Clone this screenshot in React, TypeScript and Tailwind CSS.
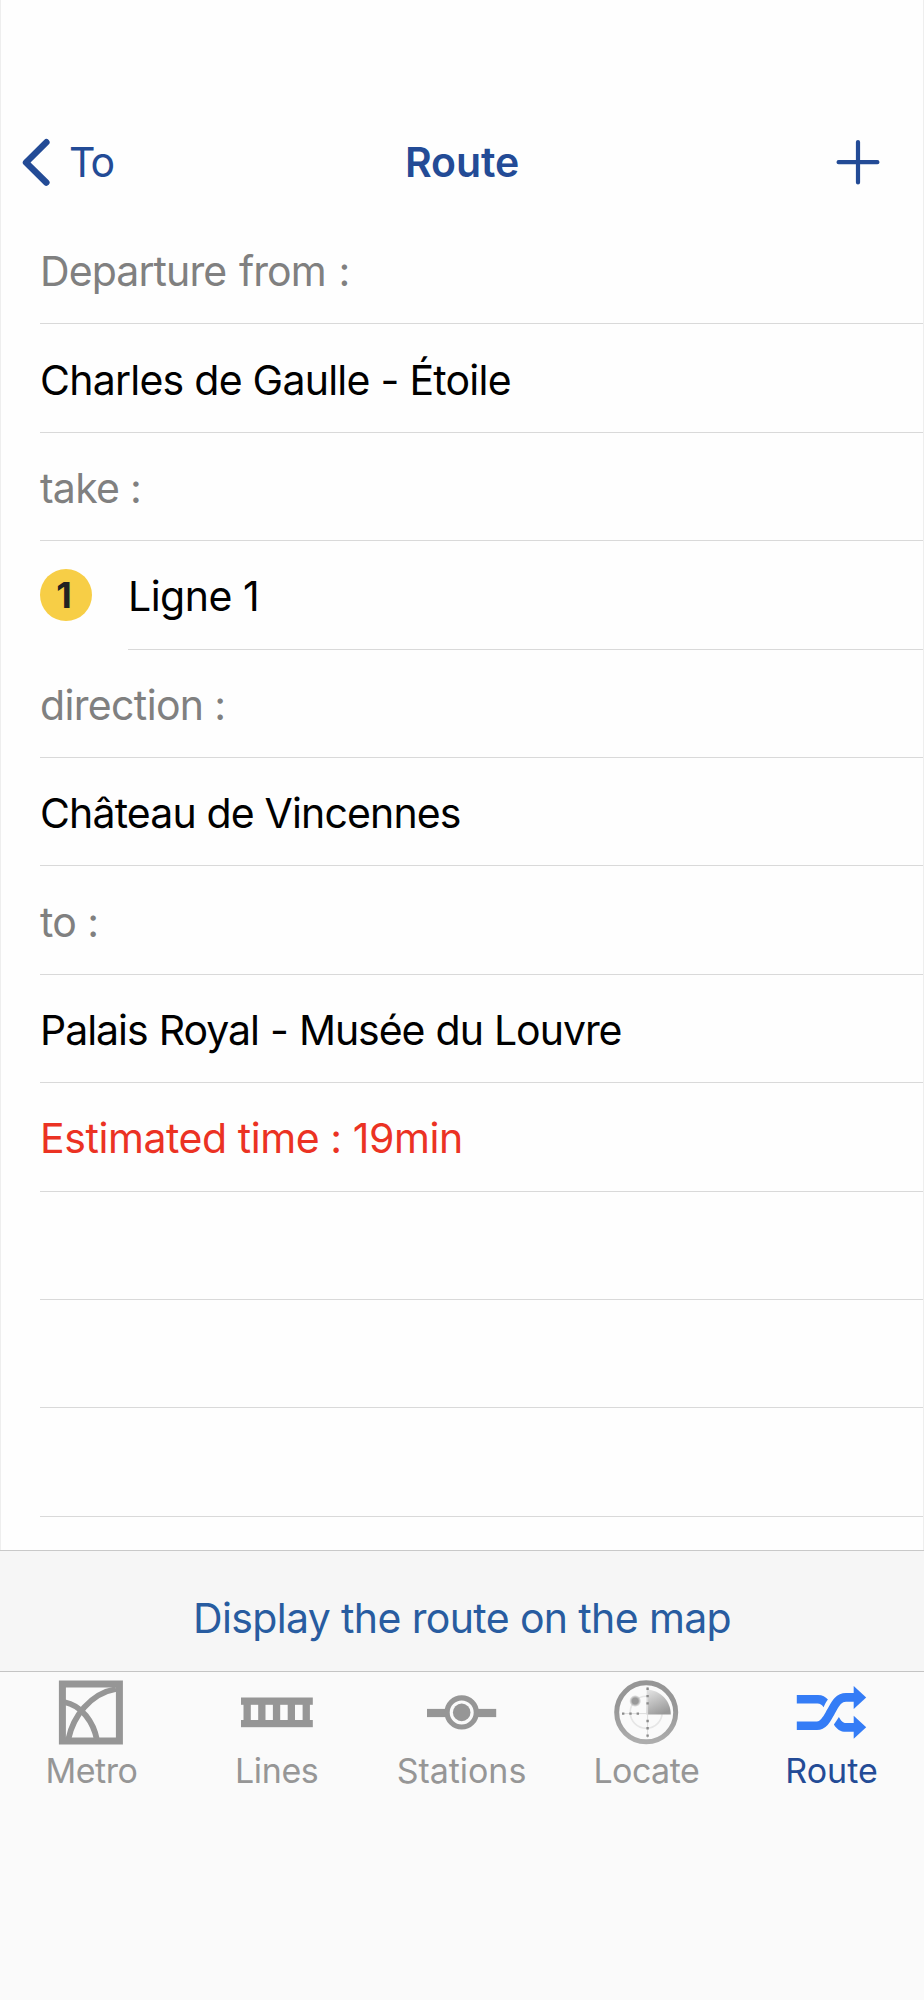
import React from "react";
import { clsx } from "clsx";

interface RouteRow {
  text: string;
  tone: "label" | "station" | "time";
  tracking: string;
  line?: string;
}

const rows: RouteRow[] = [
  { text: "Departure from :", tone: "label", tracking: "tracking-[-0.9px] [word-spacing:2px]" },
  { text: "Charles de Gaulle - Étoile", tone: "station", tracking: "tracking-[-0.75px]" },
  { text: "take :", tone: "label", tracking: "tracking-[-0.75px]" },
  { text: "Ligne 1", tone: "station", tracking: "tracking-[-0.5px]", line: "1" },
  { text: "direction :", tone: "label", tracking: "tracking-[-0.65px]" },
  { text: "Château de Vincennes", tone: "station", tracking: "tracking-[-0.85px]" },
  { text: "to :", tone: "label", tracking: "tracking-[-0.65px]" },
  { text: "Palais Royal - Musée du Louvre", tone: "station", tracking: "tracking-[-1.03px] [word-spacing:0.6px]" },
  { text: "Estimated time : 19min", tone: "time", tracking: "tracking-[-0.43px]" },
  { text: "", tone: "label", tracking: "" },
  { text: "", tone: "label", tracking: "" },
  { text: "", tone: "label", tracking: "" }
];

const toneClasses = {
  label: "text-[#808080]",
  station: "text-black",
  time: "text-[#eb3223]"
};

const MetroIcon = () => (
  <svg viewBox="0 0 72 65" className="w-[72px] h-[65px]" fill="none" stroke="#969696">
    <rect x="6.4" y="4" width="57" height="57" strokeWidth="7" />
    <path d="M12.4 59C17 37 34 13.5 60 9" strokeWidth="5.8" />
    <path d="M8 22C26 25.5 37.5 42 41 60" strokeWidth="5.8" />
  </svg>
);

const LinesIcon = () => (
  <svg viewBox="0 0 72 65" className="w-[72px] h-[65px]" fill="#969696">
    <rect x="0" y="17.5" width="71.8" height="7.3" />
    <rect x="0" y="40" width="71.8" height="7.2" />
    {[2.5, 17.2, 31.9, 46.7, 61.6].map((x) => (
      <rect key={x} x={x} y="22" width="7.3" height="20" />
    ))}
  </svg>
);

const StationsIcon = () => (
  <svg viewBox="0 0 72 65" className="w-[72px] h-[65px]">
    <rect x="1" y="28.9" width="69.2" height="8.2" fill="#969696" />
    <circle cx="35.7" cy="32.4" r="14.6" fill="#fafafa" stroke="#969696" strokeWidth="5.2" />
    <circle cx="35.7" cy="32.4" r="8.8" fill="#969696" />
  </svg>
);

const LocateIcon = () => (
  <svg viewBox="0 0 72 65" className="w-[72px] h-[65px]" fill="none">
    <defs>
      <linearGradient id="sweep" x1="0.15" y1="0" x2="0.6" y2="1">
        <stop offset="0" stopColor="#e2e2e2" />
        <stop offset="1" stopColor="#999999" />
      </linearGradient>
      <linearGradient id="ring" x1="0" y1="0" x2="0" y2="1">
        <stop offset="0.4" stopColor="#969696" />
        <stop offset="1" stopColor="#adadad" />
      </linearGradient>
      <radialGradient id="blip">
        <stop offset="0.5" stopColor="#999999" />
        <stop offset="1" stopColor="#999999" stopOpacity="0" />
      </radialGradient>
    </defs>
    <circle cx="35.2" cy="32.3" r="29.5" stroke="url(#ring)" strokeWidth="5" />
    <circle cx="35.2" cy="32.3" r="16" stroke="#e6e6e6" strokeWidth="1.6" />
    <path d="M35.6 34.4V9.6C50 10.5 59.6 21 59.8 34.4Z" fill="url(#sweep)" />
    <path d="M11 33.6H36M36.6 7V58" stroke="#dcdcdc" strokeWidth="1" />
    <path d="M11 33.6H28" stroke="#8c8c8c" strokeWidth="2.4" strokeDasharray="2.4 4.9" />
    <path d="M36.6 7.6V26M36.6 39.8V58" stroke="#8c8c8c" strokeWidth="2.4" strokeDasharray="2.4 4.9" />
    <circle cx="24.2" cy="21" r="6" fill="url(#blip)" />
  </svg>
);

const RouteIcon = () => (
  <svg viewBox="0 0 72 65" className="w-[72px] h-[65px]" fill="#347cf6">
    <path d="M0.8 15H22C26.5 15 29.5 16.8 31.9 19.6C30.1 22 29 24.3 27.6 27.2C25.8 24.7 24.3 23.5 21.5 23.5H0.8Z" />
    <path
      d="M0.8 45.7H21C28.5 45.7 31.5 37.5 35 31.5C39 24.5 42 17.4 50 17.4H59"
      fill="none"
      stroke="#347cf6"
      strokeWidth="8.6"
    />
    <path d="M57.7 6L70.2 17.4L57.7 29Z" />
    <path d="M57.7 35.7L70.2 47.2L57.7 58.7V51.8H50C44.5 51.8 40.5 49 37.9 44.4C39.8 42 41.2 39.6 42.9 37C45 40.5 46.5 43 50 43H57.7Z" />
  </svg>
);

const tabs = [
  { name: "Metro", icon: MetroIcon, tracking: "tracking-[-0.45px] mr-[2px]" },
  { name: "Lines", icon: LinesIcon, tracking: "tracking-[-0.4px] mr-px" },
  { name: "Stations", icon: StationsIcon, tracking: "tracking-[-0.05px] mr-px" },
  { name: "Locate", icon: LocateIcon, tracking: "tracking-[-0.55px] mr-px" },
  { name: "Route", icon: RouteIcon, tracking: "tracking-[0px]" }
];

export default function App() {
  const activeTab = "Route";

  return (
    <div className="w-[924px] h-[2000px] flex flex-col overflow-hidden bg-[#fefefe] font-['Inter','Liberation_Sans',sans-serif]">
      {/* Navigation bar */}
      <header className="h-[216px] shrink-0 pt-[108px] border-x border-[#eeeeee] grid grid-cols-3 items-center text-[41px] text-[#234b96]">
        <button type="button" className="h-[107px] flex items-center pl-[20px]">
          <svg viewBox="0 0 30 50" className="w-[30px] h-[50px]" fill="none" stroke="#234b96" strokeWidth="6.4">
            <path d="M25.4 5.2L5 25.5L25.4 45.6" strokeLinecap="round" strokeLinejoin="round" />
          </svg>
          <span className="ml-[18px] pt-[2px] tracking-[-1.8px]">To</span>
        </button>
        <h1 className="pt-[2px] text-center font-semibold tracking-[-0.1px]">Route</h1>
        <button type="button" className="flex justify-end pr-[42px]">
          <svg viewBox="0 0 46 46" className="w-[46px] h-[46px]" fill="none" stroke="#234b96" strokeWidth="4.2">
            <path d="M23 3V43.5M3.6 23.2H42.4" strokeLinecap="round" />
          </svg>
        </button>
      </header>

      {/* Route steps */}
      <main className="flex-1 min-h-0 overflow-hidden border-x border-[#eeeeee] text-[41px] leading-[48px]">
        {rows.map((row, i) => (
          <div key={i} className="h-[108.4px] pl-[39px] flex">
            {row.line && (
              <div className="w-[88px] h-full flex items-center shrink-0">
                <span className="w-[52px] h-[52px] pr-[4px] rounded-full bg-[#f7ce46] text-[#222222] text-[36px] leading-none font-bold flex items-center justify-center">
                  {row.line}
                </span>
              </div>
            )}
            <div className="flex-1 border-b border-[#d9d9d9] flex items-center">
              <span className={clsx("whitespace-nowrap pt-[3px]", toneClasses[row.tone], row.tracking)}>{row.text}</span>
            </div>
          </div>
        ))}
      </main>

      <button
        type="button"
        className="h-[121px] shrink-0 border-t border-[#c9c9c9] bg-[#f6f6f6] text-[#285ca0] text-[41px] flex items-center justify-center"
      >
        <span className="pt-[16px] tracking-[-0.63px]">Display the route on the map</span>
      </button>

      <nav className="h-[329px] shrink-0 border-t border-[#c4c4c4] bg-[#fafafa] grid grid-cols-5 items-start pt-[8px]">
        {tabs.map(({ name, icon: Icon, tracking }) => (
          <button key={name} type="button" className="flex flex-col items-center">
            <Icon />
            <span
              className={clsx(
                "mt-[5px] text-[34px] leading-[42px]",
                tracking,
                name === activeTab ? "text-[#234b96]" : "text-[#969696]"
              )}
            >
              {name}
            </span>
          </button>
        ))}
      </nav>
    </div>
  );
}
